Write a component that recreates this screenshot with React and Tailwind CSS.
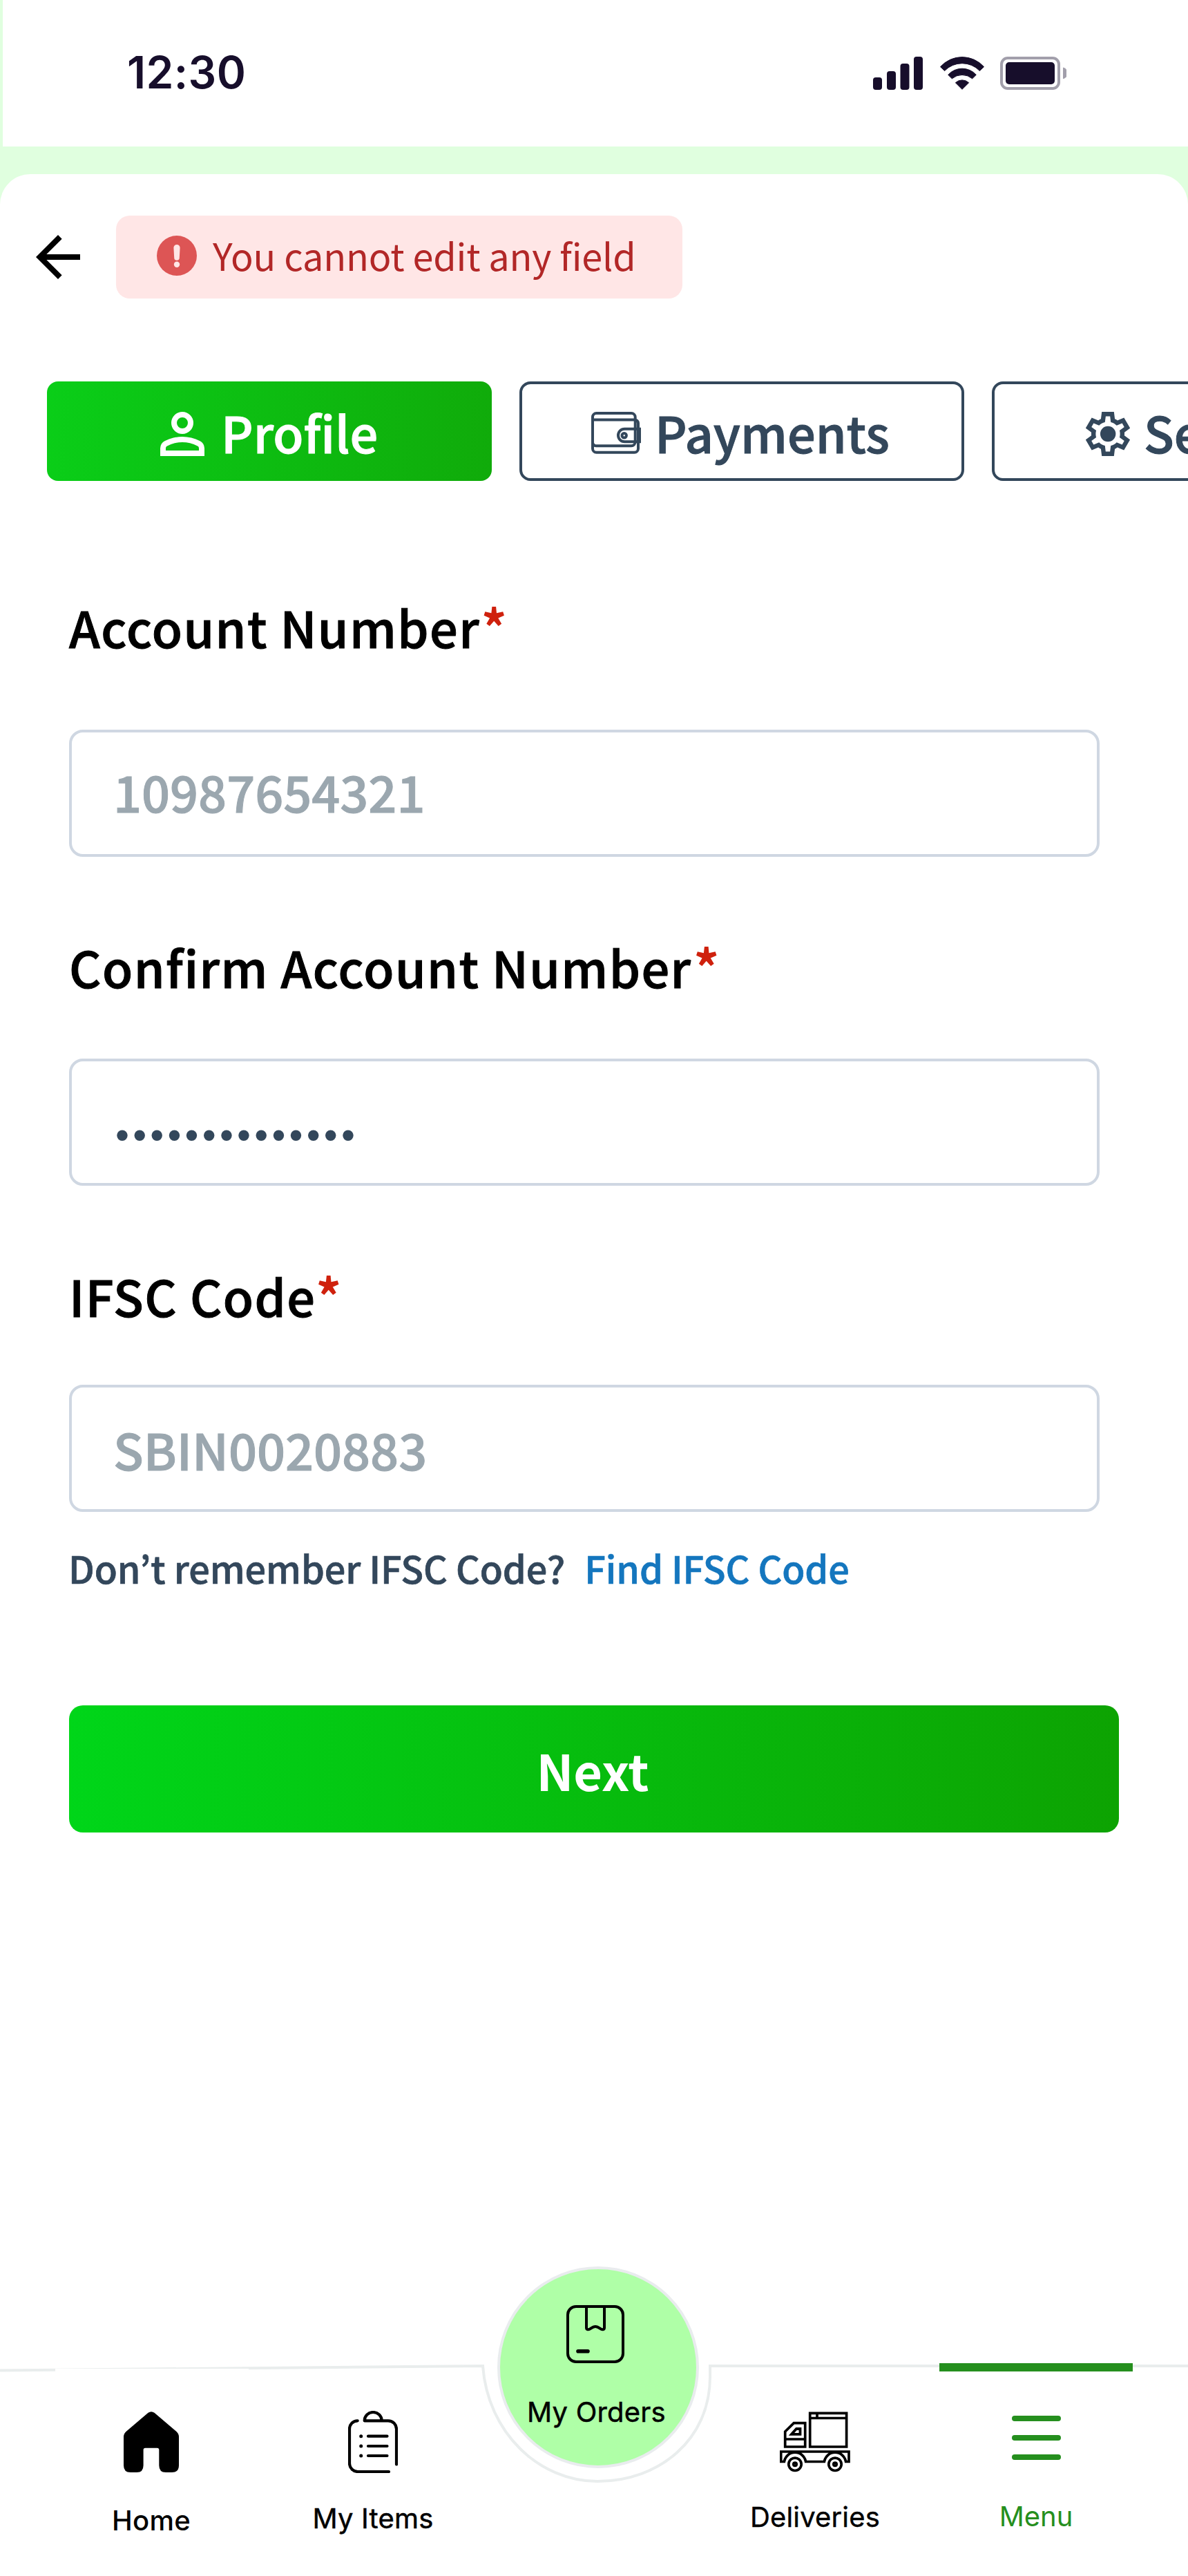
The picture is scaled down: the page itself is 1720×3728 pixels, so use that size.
const cjk = "font-['Noto_Sans_CJK_KR','Noto_Sans',sans-serif]";

function SignalIcon() {
  return (
    <svg className="h-12 w-[73px]" viewBox="0 0 73 48" fill="#170E2B">
      <rect x="0" y="30" width="13" height="18" rx="4" />
      <rect x="20" y="21" width="13" height="27" rx="4" />
      <rect x="39.5" y="10" width="13" height="38" rx="4" />
      <rect x="59" y="0" width="13" height="48" rx="4" />
    </svg>
  );
}

function WifiIcon() {
  return (
    <svg className="h-12 w-16" viewBox="0 0 64 48" fill="#170E2B" stroke="#170E2B" strokeWidth="1" strokeLinejoin="round">
      <path d="M.5 14.7A42.2 42.2 0 0 1 63.5 14.7L57.4 20.5A35.3 35.3 0 0 0 6.6 20.5Z" />
      <path d="M11.7 26.3A27.2 27.2 0 0 1 52.3 26.3L46.7 31.8A22.9 22.9 0 0 0 17.3 31.8Z" />
      <path d="M22.4 37.7A14 14 0 0 1 41.6 37.7L32 47.3Z" />
    </svg>
  );
}

function BatteryIcon() {
  return (
    <svg className="h-12 w-24" viewBox="0 0 96 48">
      <rect x="2" y="2" width="83" height="44" rx="9" fill="none" stroke="#A29FAB" strokeWidth="4" />
      <rect x="8" y="8" width="71" height="32" rx="5" fill="#170E2B" />
      <path d="M91 15.5a8.6 8.6 0 0 1 0 16.8z" fill="#A29FAB" />
    </svg>
  );
}

function BackIcon() {
  return (
    <svg className="size-24 shrink-0" viewBox="0 0 24 24">
      <path d="M20 11H7.83l5.59-5.59L12 4l-8 8 8 8 1.41-1.41L7.83 13H20v-2z" />
    </svg>
  );
}

function AlertIcon() {
  return (
    <svg className="size-[58px] shrink-0" viewBox="0 0 58 58">
      <circle cx="29" cy="29" r="29" fill="#DD5555" />
      <path d="M24.4 17.5a4.6 4.6 0 0 1 9.2 0l-.8 14.5a3.8 3.8 0 0 1-7.6 0z" fill="#FFE6E6" />
      <circle cx="29" cy="41.8" r="4.2" fill="#FFE6E6" />
    </svg>
  );
}

function PersonIcon() {
  return (
    <svg className="mt-2 size-16" viewBox="4 4 16 16" fill="currentColor">
      <path d="M12 12q-1.65 0-2.825-1.175T8 8t1.175-2.825T12 4t2.825 1.175T16 8t-1.175 2.825T12 12m-8 8v-2.8q0-.85.438-1.562T5.6 14.55q1.55-.775 3.15-1.162T12 13t3.25.388t3.15 1.162q.725.375 1.163 1.088T20 17.2V20zm2-2h12v-.8q0-.275-.137-.5t-.363-.35q-1.35-.675-2.725-1.012T12 15t-2.775.338T6.5 16.35q-.225.125-.363.35T6 17.2zm6-8q.825 0 1.413-.587T14 8t-.587-1.412T12 6t-1.412.588T10 8t.588 1.413T12 10" />
    </svg>
  );
}

function WalletIcon() {
  return (
    <svg className="mt-[5px] h-[61px] w-[72px]" viewBox="6 11 72 61" fill="none" stroke="currentColor" strokeWidth="4">
      <path d="M8 55V18.5a5.5 5.5 0 0 1 5.5-5.5H64a5.7 5.7 0 0 1 5.7 5.7V54.5a5.8 5.8 0 0 1-5.8 5.8H13A5 5 0 0 1 8 55v9.3a5.5 5.5 0 0 0 5.5 5.5H68.500A5.5 5.5 0 0 0 74 64.3V27.5a5 5 0 0 0-5-5H8" />
      <path d="M76.3 35.7H54.3a9.3 9.3 0 0 0 0 18.6H76.3z" />
      <circle cx="53.7" cy="45.2" r="3.2" />
    </svg>
  );
}

function GearIcon() {
  return (
    <svg className="mt-2 size-16" viewBox="2 2 20 20" fill="currentColor">
      <path d="m9.25 22l-.4-3.2q-.325-.125-.612-.3t-.563-.375L4.7 19.375l-2.75-4.75l2.575-1.95Q4.5 12.5 4.5 12.338v-.675q0-.163.025-.338L1.95 9.375l2.75-4.75l2.975 1.25q.275-.2.575-.375t.6-.3l.4-3.2h5.5l.4 3.2q.325.125.613.3t.562.375l2.975-1.25l2.75 4.75l-2.575 1.95q.025.175.025.338v.674q0 .163-.05.338l2.575 1.95l-2.75 4.75l-2.95-1.25q-.275.2-.575.375t-.6.3l-.4 3.2zM11 20h1.975l.35-2.65q.775-.2 1.438-.587t1.212-.938l2.475 1.025l.975-1.7l-2.15-1.625q.125-.35.175-.737T17.5 12t-.05-.787t-.175-.738l2.15-1.625l-.975-1.7l-2.475 1.05q-.55-.575-1.212-.962t-1.438-.588L13 4h-1.975l-.35 2.65q-.775.2-1.437.588t-1.213.937L5.55 7.15l-.975 1.7l2.15 1.6q-.125.375-.175.75t-.05.8q0 .4.05.775t.175.75l-2.15 1.625l.975 1.7l2.475-1.05q.55.575 1.213.963t1.437.587zm1.05-4.5q1.45 0 2.475-1.025T15.55 12t-1.025-2.475T12.05 8.5q-1.475 0-2.487 1.025T8.55 12t1.013 2.475T12.05 15.5" />
    </svg>
  );
}

function HomeIcon() {
  return (
    <svg className="mr-0.5 h-[90px] w-20" viewBox="0 -1 80 90">
      <path d="M35.5 1.8Q40-1.5 44.5 1.8L76.5 29Q80 32 80 37V78Q80 88 70 88H61Q51.3 88 51.3 78V55.5Q51.3 52.7 48.5 52.7H31.5Q28.6 52.7 28.6 55.5V78Q28.6 88 19 88H10Q0 88 0 78V37Q0 32 3.5 29Z" />
    </svg>
  );
}

function ClipboardIcon() {
  return (
    <svg className="h-[90px] w-[72px]" viewBox="9 9 72 90" fill="none" stroke="#000" strokeWidth="4.2" strokeLinecap="round" strokeLinejoin="round">
      <path d="M22.7 23.3a11.7 11.7 0 0 0-11.7 11.7V85a12 12 0 0 0 12 12H68" />
      <path d="M79 86.5V35.3a12 12 0 0 0-12-12H32.7a12.5 12.3 0 0 1 25 0" />
      <path d="M38 45.7H65.5M38 60H65.5M38 74H65.5" />
      <path d="M27.7 45.7h.01M27.7 60h.01M27.7 74h.01" strokeWidth="5" />
    </svg>
  );
}

function PackageIcon() {
  return (
    <svg className="size-[84px]" viewBox="0 0 84 84" fill="none" stroke="#000" strokeWidth="4">
      <rect x="2" y="2" width="80" height="80" rx="12" />
      <path d="M29 2V32.5C29 35.5 31.5 36 34 34.5C37 32.5 39 31 42 31S47 32.5 50 34.500C52.5 36 55 35.5 55 32.5V2" />
      <path d="M17 66.7H31" strokeWidth="5.6" strokeLinecap="round" />
    </svg>
  );
}

function TruckIcon() {
  return (
    <svg className="h-[90px] w-[103px]" viewBox="9 9 103 90" fill="none" stroke="#000" strokeWidth="3.7">
      <path d="M52.7 12.3H105.6V61H52.7zM52.7 19.5H105.6M63 12.3V19.5" />
      <path d="M16.7 61V39L29.3 26.7H45.7V61zM16.7 50H45.7" />
      <path d="M26 42.8L33 35H38.5V42.8z" strokeWidth="3.8" />
      <path d="M10.7 82.5V68H109V82.5H104.6a15.8 15.8 0 0 0-31.2 0H46.6a15.8 15.8 0 0 0-31.2 0z" />
      <circle cx="31" cy="86.3" r="9.2" />
      <circle cx="89" cy="86.3" r="9.2" />
      <circle cx="31" cy="86.3" r="2.2" />
      <circle cx="89" cy="86.3" r="2.2" />
    </svg>
  );
}

function MenuIcon() {
  return (
    <svg className="h-[90px] w-[71px]" viewBox="0 0 71 90" fill="#258F1E">
      <rect y="7" width="71" height="8" rx="4" />
      <rect y="35" width="71" height="8" rx="4" />
      <rect y="63" width="71" height="8" rx="4" />
    </svg>
  );
}

function Label({ children, className, starClass }) {
  return (
    <div className={`flex text-[72px] leading-[72px] font-medium text-black ${className}`}>
      <span className="tracking-[0.02em] [-webkit-text-stroke:1px_currentColor]">{children}</span>
      <span className={`-mt-0.5 font-bold text-[#CF210D] ${starClass}`}>*</span>
    </div>
  );
}

function Field({ children, className }) {
  return (
    <div className={`flex h-[184px] w-[1492px] items-center rounded-[20px] border-4 border-[#CFD7E2] pl-[60px] text-[72px] leading-[72px] font-medium text-[#9BA7AF] ${className}`}>
      {children}
    </div>
  );
}

function NavItem({ icon, label, className, labelClass }) {
  return (
    <div className={`mt-[148px] flex w-[280px] flex-col items-center pt-[61px] ${className}`}>
      {icon}
      <span className={`text-[40px] leading-[40px] whitespace-nowrap ${labelClass}`}>{label}</span>
    </div>
  );
}

export default function App() {
  return (
    <div className={`flex h-[3728px] w-[1720px] flex-col overflow-hidden bg-[#E0FFDF] ${cjk}`}>
      <header className="ml-1 flex h-[212px] items-center justify-between bg-white pr-[176px] pb-0.5 pl-[180px]">
        <span className="font-['Inter'] text-[64px] leading-[64px] font-semibold tracking-[0.4px] text-[#170E2B]">12:30</span>
        <div className="flex gap-[23.5px] pt-0.5">
          <SignalIcon />
          <WifiIcon />
          <BatteryIcon />
        </div>
      </header>

      <main className="mt-10 flex flex-1 flex-col rounded-t-[44px] bg-white">
        <div className="flex items-center gap-9 pt-[60px] pl-9">
          <BackIcon />
          <div className="flex h-[120px] w-[820px] items-center gap-[23px] rounded-[20px] bg-[#FFE6E6] pb-1 pl-[59px]">
            <AlertIcon />
            <span className="pb-[3px] text-[54px] leading-[54px] tracking-[-0.16px] whitespace-nowrap text-[#B22727]">You cannot edit any field</span>
          </div>
        </div>

        <div className="mt-[120px] flex gap-10 pl-[68px] text-[72px] leading-[72px] font-medium text-[#33475B]">
          <div className="flex h-36 w-[644px] shrink-0 items-center gap-6 rounded-2xl bg-[linear-gradient(94deg,#0ACE18,#10AB0A)] pl-[164px] text-white">
            <PersonIcon />
            <span className="pt-0.5 [-webkit-text-stroke:1px_currentColor]">Profile</span>
          </div>
          <div className="flex h-36 w-[644px] shrink-0 items-center gap-5 rounded-2xl border-4 border-[#33475B] pl-[100px]">
            <WalletIcon />
            <span className="pt-0.5 [-webkit-text-stroke:1px_currentColor]">Payments</span>
          </div>
          <div className="flex h-36 w-[644px] shrink-0 items-center gap-5 rounded-2xl border-4 border-[#33475B] pl-[132px]">
            <GearIcon />
            <span className="pt-0.5 [-webkit-text-stroke:1px_currentColor]">Settings</span>
          </div>
        </div>

        <section className="flex flex-col pl-[100px]">
          <Label className="mt-[175px]" starClass="ml-0.5">Account Number</Label>
          <Field className="mt-[113px] pb-[6px]">
            <span className="[-webkit-text-stroke:1px_currentColor]">10987654321</span>
          </Field>
          <Label className="mt-[123px]" starClass="ml-[3px]">Confirm Account Number</Label>
          <Field className="mt-[97px]">
            <span className="ml-[3px] pt-9 font-['Liberation_Sans'] text-[57px] tracking-[5.2px] text-[#33475B]">••••••••••••••</span>
          </Field>
          <Label className="mt-[123px]" starClass="">IFSC Code</Label>
          <Field className="mt-[93px]">
            <span className="pt-px [-webkit-text-stroke:1px_currentColor]">SBIN0020883</span>
          </Field>
          <div className="mt-[53px] -ml-px flex gap-7 text-[54px] leading-[56px] font-medium tracking-[-0.06px] whitespace-nowrap [-webkit-text-stroke:0.7px_currentColor]">
            <span className="text-[#33475B]">Don’t remember IFSC Code?</span>
            <span className="text-[#1476BE]">Find IFSC Code</span>
          </div>
          <div className="mt-[171px] flex h-[184px] w-[1520px] items-center justify-center rounded-[20px] bg-[linear-gradient(92deg,#00D619,#0DA302)] pt-0.5 pr-1 text-[72px] leading-[72px] font-bold text-white">
            Next
          </div>
        </section>
      </main>

      <nav className="relative h-[448px] bg-white font-['Inter'] text-black">
        <svg className="absolute inset-0 h-full w-full" viewBox="0 0 1720 448" fill="none" stroke="#E9EDED" strokeWidth="4">
          <path d="M0 150.5L699 144C706 240 780 311 865 311C955 311 1028 250 1028 160V144H1720" />
        </svg>
        <div className="relative flex gap-10 pl-20">
          <NavItem icon={<HomeIcon />} label="Home" className="bg-white" labelClass="mt-[49px] mr-0.5 font-medium tracking-[0.3px]" />
          <NavItem icon={<ClipboardIcon />} label="My Items" className="" labelClass="mt-[46px] font-normal tracking-[0.2px] [-webkit-text-stroke:0.5px_currentColor]" />
          <div className="-mr-3 flex size-[292px] flex-col items-center rounded-full border-4 border-[#E9ECEE] bg-[#AFFFA7] pt-[52px] pr-2">
            <PackageIcon />
            <span className="mt-[51px] ml-[3px] text-[40px] leading-[40px] font-normal tracking-[0.2px] whitespace-nowrap [-webkit-text-stroke:0.5px_currentColor]">My Orders</span>
          </div>
          <NavItem icon={<TruckIcon />} label="Deliveries" className="" labelClass="mt-11 font-normal tracking-[0.15px] [-webkit-text-stroke:0.4px_currentColor]" />
          <NavItem icon={<MenuIcon />} label="Menu" className="relative before:absolute before:-top-2 before:h-3 before:w-full before:bg-[#258F1E]" labelClass="mt-[43px] font-normal text-[#258F1E]" />
        </div>
      </nav>
    </div>
  );
}
